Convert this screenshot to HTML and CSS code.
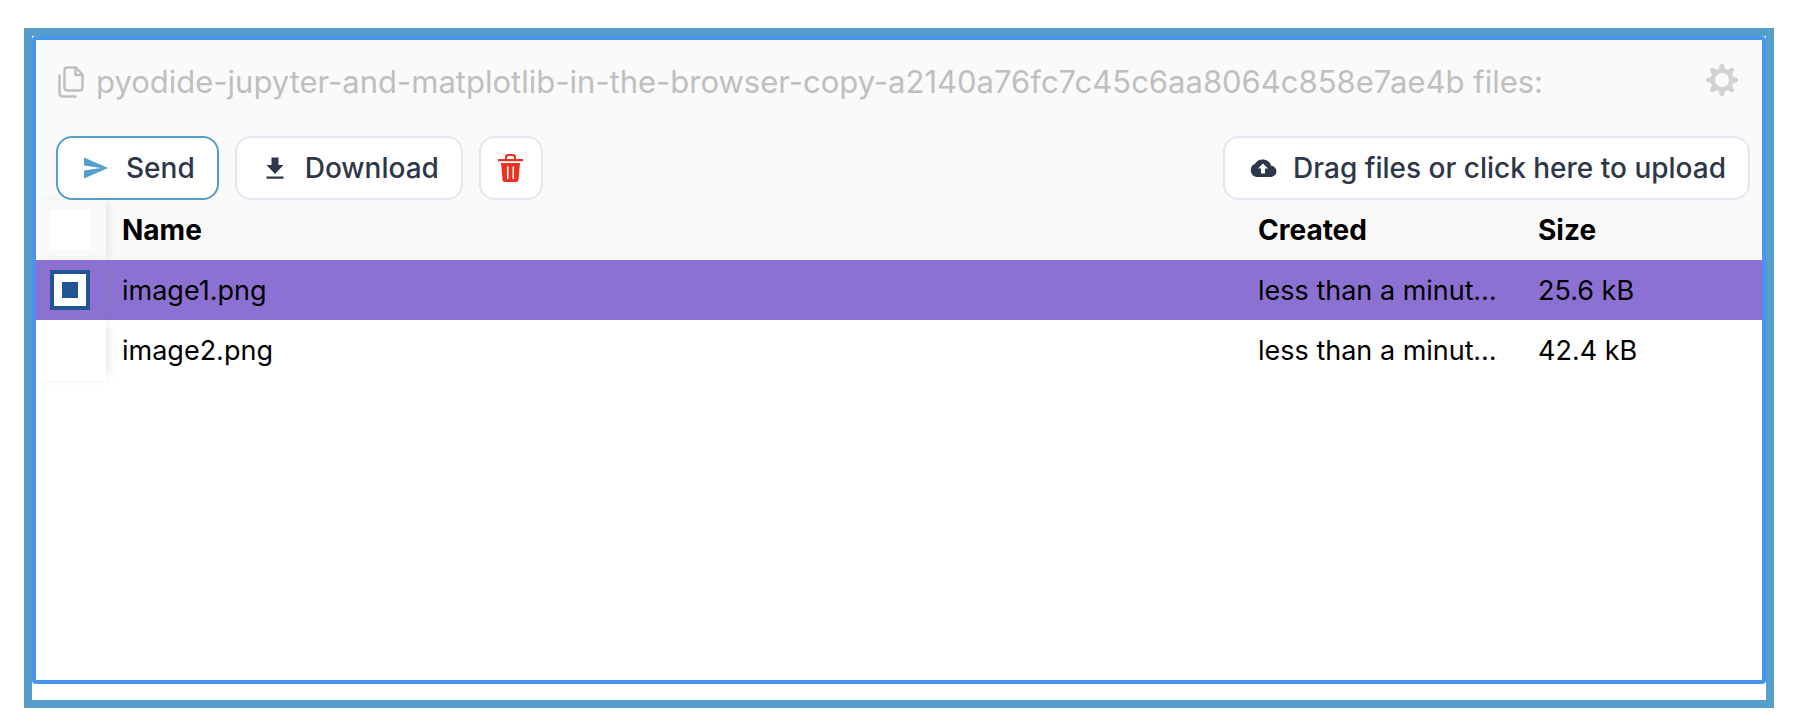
FILE: index.html
```
<!DOCTYPE html>
<html lang="en">
<head>
<meta charset="utf-8">
<meta name="viewport" content="width=device-width, initial-scale=1">
<title>Files</title>
<link rel="stylesheet" href="styles.css">
</head>
<body>
<main class="frame">
  <section class="panel">
    <header class="panel-header">
      <svg class="icon-files" viewBox="0 0 26 32" fill="none" stroke="currentColor" stroke-width="2.500" stroke-linejoin="round" stroke-linecap="round" aria-hidden="true">
        <path d="M9.500 1.500H18L24.500 8.500V21.500Q24.500 24.500 21.500 24.500H9.500Q6.500 24.500 6.500 21.500V4.500Q6.500 1.500 9.500 1.500Z"/>
        <path d="M17.500 2V9H24M1.500 9.500V27Q1.500 30.500 5 30.500H17.500"/>
      </svg>
      <h1 class="title">pyodide-jupyter-and-matplotlib-in-the-browser-copy-a2140a76fc7c45c6aa8064c858e7ae4b files:</h1>
      <button class="settings" type="button" aria-label="Settings">
        <svg class="icon-gear" viewBox="0 0 32 32" aria-hidden="true">
          <g fill="currentColor">
            <path id="tooth" d="M12.200 6L14 1Q14.300 0 15 0H17Q17.700 0 18 1L19.800 6V26L18 31Q17.700 32 17 32H15Q14.300 32 14 31L12.200 26Z"/>
            <use href="#tooth" transform="rotate(45 16 16)"/>
            <use href="#tooth" transform="rotate(90 16 16)"/>
            <use href="#tooth" transform="rotate(135 16 16)"/>
            <circle cx="16" cy="16" r="11.500"/>
          </g>
          <circle cx="16" cy="16" r="7" fill="#fafafa"/>
        </svg>
      </button>
    </header>
    <div class="toolbar">
      <button class="btn btn-primary" type="button">
        <svg class="icon" viewBox="0 0 28 28" fill="currentColor" aria-hidden="true"><path d="M2 3.500L26 14L2 24.500V16.500L19 14L2 11.500Z"/></svg>
        Send
      </button>
      <button class="btn" type="button">
        <svg class="icon" viewBox="0 0 28 28" fill="currentColor" aria-hidden="true"><path d="M10.500 3.500H17.500V11H22.500L14 20L5.500 11H10.500ZM5.500 22.500H22.500V24.800H5.500Z"/></svg>
        Download
      </button>
      <button class="btn btn-icon" type="button" aria-label="Delete">
        <svg class="icon" viewBox="0 0 28 28" aria-hidden="true">
          <path fill="currentColor" fill-rule="evenodd" d="M1 5H8V3Q8 0 11 0H16Q19 0 19 3V5H26V7.200H1ZM10 5H17V3.500Q17 2 15.500 2H11.500Q10 2 10 3.500ZM4 9H23L21.500 26Q21.300 28 19.500 28H7.500Q5.700 28 5.500 26ZM10 12.500V25H11.500V12.500ZM15.500 12.500V25H17V12.500Z"/>
        </svg>
      </button>
      <button class="btn btn-upload" type="button">
        <svg class="icon" viewBox="0 0 28 28" aria-hidden="true">
          <path fill="currentColor" fill-rule="evenodd" d="M22.200 11.800A9 9 0 0 0 6 9.700A7 7 0 0 0 7.500 23H21.500A5.600 5.600 0 0 0 22.200 11.800ZM16 14.500V19.500H12V14.500H9L14 9.500L19 14.500Z"/>
        </svg>
        Drag files or click here to upload
      </button>
    </div>
    <table class="files">
      <colgroup><col class="col-select"><col><col class="col-created"><col class="col-size"></colgroup>
      <thead>
        <tr>
          <th class="select"><input class="check" type="checkbox" aria-label="Select all files"></th>
          <th>Name</th><th>Created</th><th>Size</th>
        </tr>
      </thead>
      <tbody>
        <tr class="selected">
          <td class="select"><input class="check" type="checkbox" aria-label="Select image1.png" checked></td>
          <td>image1.png</td><td>less than a minute ago</td><td>25.6 kB</td>
        </tr>
        <tr>
          <td class="select"><input class="check" type="checkbox" aria-label="Select image2.png"></td>
          <td>image2.png</td><td>less than a minute ago</td><td>42.4 kB</td>
        </tr>
      </tbody>
    </table>
  </section>
</main>
</body>
</html>
```
FILE: styles.css
```
* {
  box-sizing: border-box;
}

body {
  margin: 0;
  min-height: 100vh;
  padding: 28px 20px 10px 24px;
  display: flex;
  background: #fff;
  color: #000;
  font-family: Inter, "Liberation Sans", sans-serif;
  font-size: 28px;
}

.frame {
  flex: 1;
  min-width: 0;
  display: flex;
  border: 8px solid #549ec9;
  padding-bottom: 16px;
}

.panel {
  flex: 1;
  min-width: 0;
  border: 4px solid #4994ee;
  border-radius: 4px;
}

.panel-header {
  display: flex;
  align-items: center;
  gap: 12px;
  height: 96px;
  padding: 0 24px 12px 22px;
  background: #fafafa;
  color: #bfbfbf;
}

.icon-files {
  flex: none;
  width: 26px;
  height: 32px;
}

.title {
  flex: 1;
  min-width: 0;
  margin: 0;
  overflow: hidden;
  white-space: nowrap;
  font-size: 31px;
  line-height: 40px;
  font-weight: 400;
}

.settings {
  flex: none;
  border: 0;
  padding: 0 0 4px;
  background: none;
  color: #d3d3d3;
}

.icon-gear {
  display: block;
  width: 32px;
  height: 32px;
}

.toolbar {
  display: flex;
  gap: 16px;
  padding: 0 12px 0 20px;
  background: #fafafa;
}

.btn {
  display: flex;
  align-items: center;
  gap: 16px;
  height: 64px;
  padding: 0 22px 0 24px;
  border: 2px solid #e2e8f0;
  border-radius: 16px;
  background: #fff;
  color: #2d3748;
  font: inherit;
  font-weight: 500;
  white-space: nowrap;
}

.btn-primary {
  border-color: #549ec9;
}

.btn-primary .icon {
  color: #549ec9;
}

.btn-icon {
  width: 64px;
  padding: 0;
  justify-content: center;
  color: #ea3323;
}

.btn-upload {
  margin-left: auto;
}

.icon {
  flex: none;
  width: 28px;
  height: 28px;
}

.files {
  width: 100%;
  table-layout: fixed;
  border-collapse: separate;
  border-spacing: 0;
}

.col-select {
  width: 70px;
}

.col-created {
  width: 280px;
}

.col-size {
  width: 240px;
}

.files th,
.files td {
  height: 60px;
  padding: 0 16px;
  overflow: hidden;
  text-align: left;
  text-overflow: ellipsis;
  white-space: nowrap;
}

.files th {
  background: #f9f9f9;
  font-weight: 700;
}

.files td {
  font-size: 27px;
}

.files .select {
  position: relative;
  padding: 0 14px;
  background: #fff;
  box-shadow: 4px 0 10px -4px rgba(136, 136, 136, 0.3);
}

.files th.select {
  background: #f9f9f9;
}

.files .selected td {
  background: #8c71d3;
}

.check {
  display: block;
  appearance: none;
  width: 40px;
  height: 40px;
  margin: 0;
  background: #fff;
}

.check:checked {
  border: 4px solid #205493;
  padding: 8px;
  background: linear-gradient(#205493, #205493) content-box, #fff;
}
```
